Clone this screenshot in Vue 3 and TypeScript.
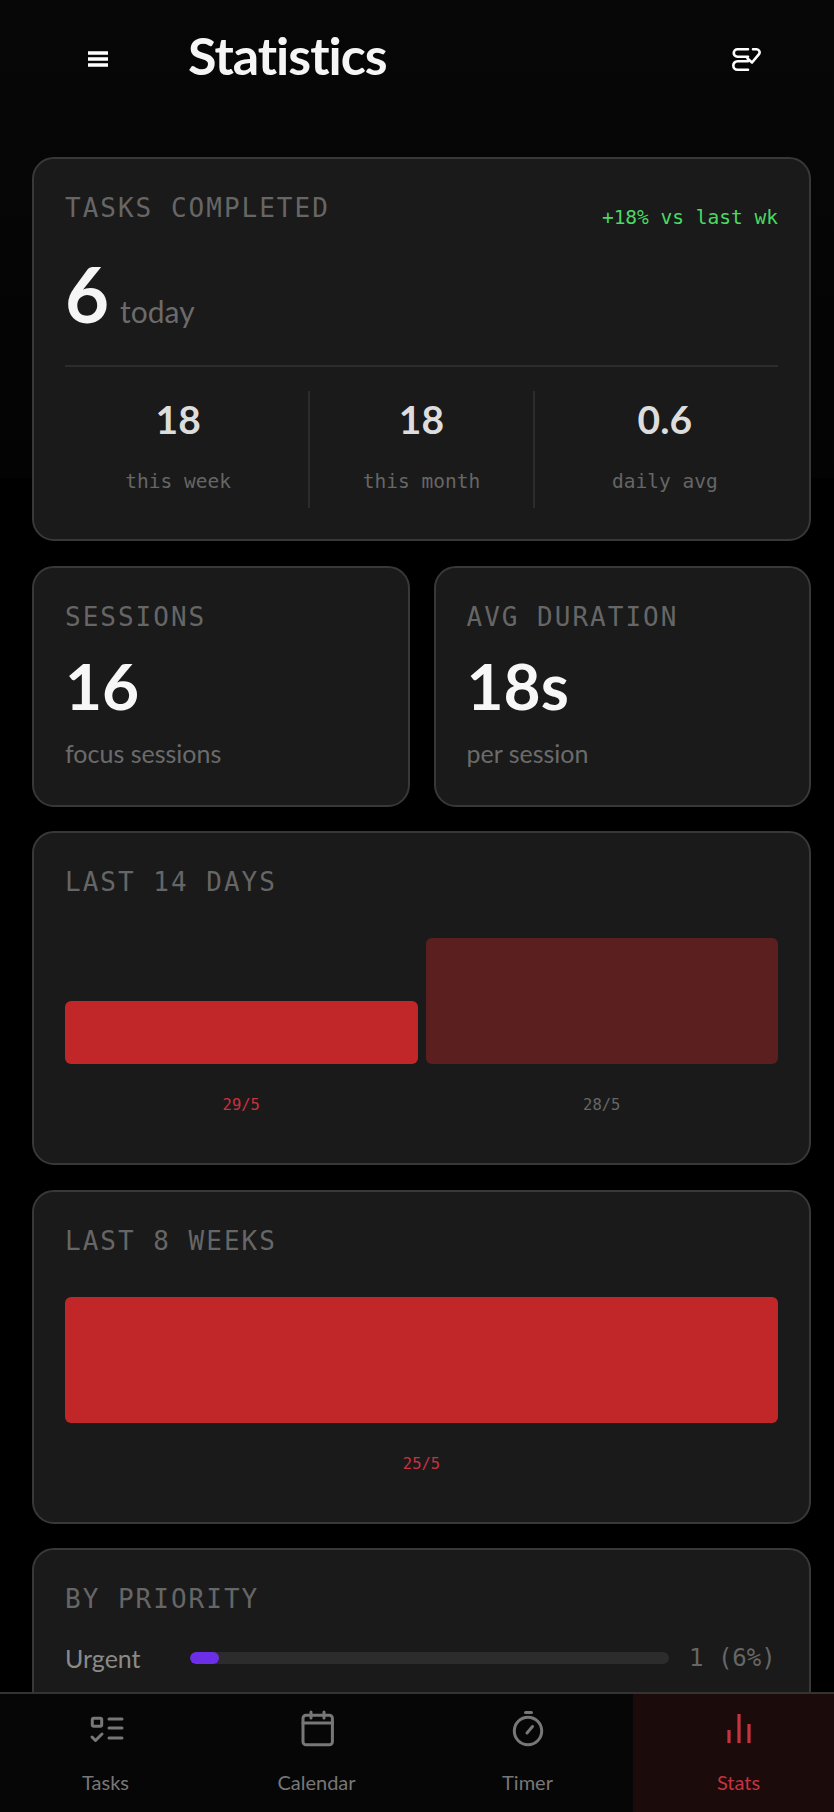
<script setup lang="ts">
const subStats = [
  { value: '18', label: 'this week' },
  { value: '18', label: 'this month' },
  { value: '0.6', label: 'daily avg' },
]

const smallCards = [
  { title: 'SESSIONS', value: '16', note: 'focus sessions' },
  { title: 'AVG DURATION', value: '18s', note: 'per session' },
]
</script>

<template>
  <div class="page">
    <header class="topbar">
      <svg class="menu-icon" width="20" height="16" viewBox="0 0 20 16">
        <path d="M0 2h20M0 8h20M0 14h20" stroke="#fff" stroke-width="3.4" />
      </svg>
      <h1>Statistics</h1>
      <svg class="sort-icon" width="30" height="26" viewBox="0 0 30 26" fill="none" stroke="#fff" stroke-width="2.6" stroke-linecap="round" stroke-linejoin="round">
        <path d="M17 2.3H6.5a3.75 3.75 0 0 0 0 7.5H17" />
        <path d="M17 14.3H6.5a4.2 4.2 0 0 0 0 8.4H17" />
        <path d="M22 2.3h3.5a3 3 0 0 1 2.3 5L21 15.5l-4.5-4" />
      </svg>
    </header>

    <main class="content">
      <section class="card tasks">
        <div class="tasks-head">
          <span class="card-title">TASKS COMPLETED</span>
          <span class="trend">+18% vs last wk</span>
        </div>
        <div class="today"><strong>6</strong><span>today</span></div>
        <div class="sub-stats">
          <div v-for="s in subStats" :key="s.label" class="sub-stat">
            <b>{{ s.value }}</b>
            <small>{{ s.label }}</small>
          </div>
        </div>
      </section>

      <div class="two-col">
        <section v-for="c in smallCards" :key="c.title" class="card small">
          <span class="card-title">{{ c.title }}</span>
          <strong>{{ c.value }}</strong>
          <span class="note">{{ c.note }}</span>
        </section>
      </div>

      <section class="card chart-card">
        <span class="card-title">LAST 14 DAYS</span>
        <div class="bars">
          <div class="bar-col">
            <div class="bar now half"></div>
            <span class="bar-label now-label">29/5</span>
          </div>
          <div class="bar-col">
            <div class="bar old full"></div>
            <span class="bar-label">28/5</span>
          </div>
        </div>
      </section>

      <section class="card chart-card">
        <span class="card-title">LAST 8 WEEKS</span>
        <div class="bars weeks">
          <div class="bar-col">
            <div class="bar now full"></div>
            <span class="bar-label now-label">25/5</span>
          </div>
        </div>
      </section>

      <section class="card priority">
        <span class="card-title">BY PRIORITY</span>
        <div class="prio-row">
          <span class="prio-name">Urgent</span>
          <div class="track"><div class="fill" :style="{ width: '6%' }"></div></div>
          <span class="prio-count">1 (6%)</span>
        </div>
      </section>
    </main>

    <nav class="tabbar">
      <div class="tab">
        <svg width="40" height="40" viewBox="0 0 40 40" fill="none" stroke="currentColor" stroke-width="3" stroke-linecap="round" stroke-linejoin="round">
          <rect x="6.3" y="10.3" width="9.4" height="8" rx="1.5" />
          <path d="M23 11h13M23 20h13M23 30h13M6 29l3.5 3.5L16 26" />
        </svg>
        <span>Tasks</span>
      </div>
      <div class="tab">
        <svg width="40" height="40" viewBox="0 0 40 40" fill="none" stroke="currentColor" stroke-width="3" stroke-linecap="round" stroke-linejoin="round">
          <rect x="6" y="7.3" width="29.4" height="29.4" rx="3" />
          <path d="M6 15h29.4M14 4v6M27 4v6" />
        </svg>
        <span>Calendar</span>
      </div>
      <div class="tab">
        <svg width="40" height="40" viewBox="0 0 40 40" fill="none" stroke="currentColor" stroke-width="3" stroke-linecap="round" stroke-linejoin="round">
          <circle cx="20" cy="23" r="13.7" />
          <path d="M17.5 4.5h6M19 25l5.5-6.5" />
        </svg>
        <span>Timer</span>
      </div>
      <div class="tab active">
        <svg width="40" height="40" viewBox="0 0 40 40" fill="none" stroke="currentColor" stroke-width="3.2">
          <path d="M10 22v13M20 6v29M30 16v19" />
        </svg>
        <span>Stats</span>
      </div>
    </nav>
  </div>
</template>

<style>
html,
body {
  margin: 0;
  background: #000;
}
</style>

<style scoped>
.page {
  position: relative;
  width: 834px;
  height: 1812px;
  overflow: hidden;
  background: linear-gradient(#070707, #030303 478px, #000 478px);
  color: #fff;
  font-family: Lato, "Noto Sans", sans-serif;
}

/* the page underneath is a little wider than the window, so the right side is cut off */
.topbar {
  box-sizing: border-box;
  width: 843px;
  height: 157px;
  padding: 0 82px 0 88px;
  display: flex;
  align-items: flex-start;
}

.topbar h1 {
  margin: 27px 0 0 80px;
  font-size: 52px;
  line-height: 56px;
  font-weight: 700;
  letter-spacing: -1px;
  color: #f5f5f5;
}

.menu-icon {
  margin-top: 51px;
}

.sort-icon {
  margin-left: auto;
  margin-top: 47px;
}

.content {
  box-sizing: border-box;
  width: 843px;
  display: flex;
  flex-direction: column;
  gap: 24.5px;
  padding: 0 32px;
}

.card {
  box-sizing: border-box;
  border: 2px solid #383838;
  border-radius: 22px;
  background: #1a1a1a;
  padding: 34px 31px;
}

.card-title {
  display: block;
  font-family: "DejaVu Sans Mono", monospace;
  font-size: 26px;
  line-height: 30px;
  letter-spacing: 2px;
  color: #666;
}

.tasks {
  height: 384px;
}

.tasks-head {
  display: flex;
  justify-content: space-between;
  align-items: flex-start;
}

.trend {
  margin-top: 13px;
  font-family: "DejaVu Sans Mono", monospace;
  font-size: 19.5px;
  line-height: 24px;
  color: #4ad964;
}

.today {
  margin-top: 27px;
  display: flex;
  align-items: baseline;
  gap: 11px;
  padding-bottom: 34px;
  border-bottom: 2px solid #2c2c2c;
}

.today strong {
  font-size: 76px;
  line-height: 74px;
  color: #f5f5f5;
}

.today span {
  font-size: 30px;
  color: #6b6b6b;
}

.sub-stats {
  margin-top: 24px;
  display: grid;
  grid-template-columns: 1fr 1fr 1fr;
  gap: 17px;
  height: 117px;
}

.sub-stat {
  display: flex;
  flex-direction: column;
  align-items: center;
}

.sub-stat:nth-child(2) {
  border-left: 2px solid #2c2c2c;
  border-right: 2px solid #2c2c2c;
}

.sub-stat b {
  margin-top: 6px;
  font-size: 39px;
  line-height: 44px;
  color: #ddd;
}

.sub-stat small {
  margin-top: 29px;
  font-family: "DejaVu Sans Mono", monospace;
  font-size: 19.5px;
  line-height: 24px;
  color: #666;
}

.two-col {
  display: grid;
  grid-template-columns: 1fr 1fr;
  gap: 24px;
}

.small {
  height: 241px;
  display: flex;
  flex-direction: column;
}

.small strong {
  margin-top: 13px;
  font-size: 64px;
  line-height: 82px;
  color: #f7f7f7;
}

.note {
  margin-top: 11.5px;
  font-size: 25px;
  line-height: 30px;
  color: #6b6b6b;
}

.chart-card {
  height: 334px;
}

.bars {
  margin-top: 41px;
  display: grid;
  grid-template-columns: 1fr 1fr;
  gap: 8px;
}

.bars.weeks {
  grid-template-columns: 1fr;
}

.bar-col {
  display: flex;
  flex-direction: column;
  justify-content: flex-end;
  height: 176px;
}

.bar {
  border-radius: 6px;
}

.half {
  height: 63px;
}

.full {
  height: 126px;
}

.now {
  background: #c12629;
}

.old {
  background: #5c1f20;
}

.bar-label {
  margin-top: 32px;
  text-align: center;
  font-family: "DejaVu Sans Mono", monospace;
  font-size: 15.5px;
  line-height: 18px;
  color: #666;
}

.now-label {
  color: #c8323f;
}

.priority {
  height: 260px;
}

.prio-row {
  margin-top: 27px;
  display: flex;
  align-items: center;
}

.prio-name {
  width: 125px;
  font-size: 25px;
  line-height: 34px;
  color: #8a8a8a;
}

.track {
  flex: 1;
  height: 12px;
  border-radius: 6px;
  background: #2c2c2c;
  overflow: hidden;
}

.fill {
  height: 100%;
  border-radius: 6px;
  background: #6d2ee8;
}

.prio-count {
  width: 89px;
  margin-left: 20px;
  font-family: "DejaVu Sans Mono", monospace;
  font-size: 24px;
  color: #666;
}

.tabbar {
  box-sizing: border-box;
  position: absolute;
  left: 0;
  top: 1692px;
  width: 844px;
  height: 120px;
  display: grid;
  grid-template-columns: repeat(4, 1fr);
  border-top: 2px solid #333;
  background: #060606;
}

.tab {
  display: flex;
  flex-direction: column;
  align-items: center;
  padding-top: 14px;
  color: #777;
}

.tab svg {
  display: block;
}

.tab span {
  margin-top: 21px;
  font-size: 20px;
  line-height: 26px;
}

.tab.active {
  background: #1b0b0b;
  color: #c8323f;
}
</style>
